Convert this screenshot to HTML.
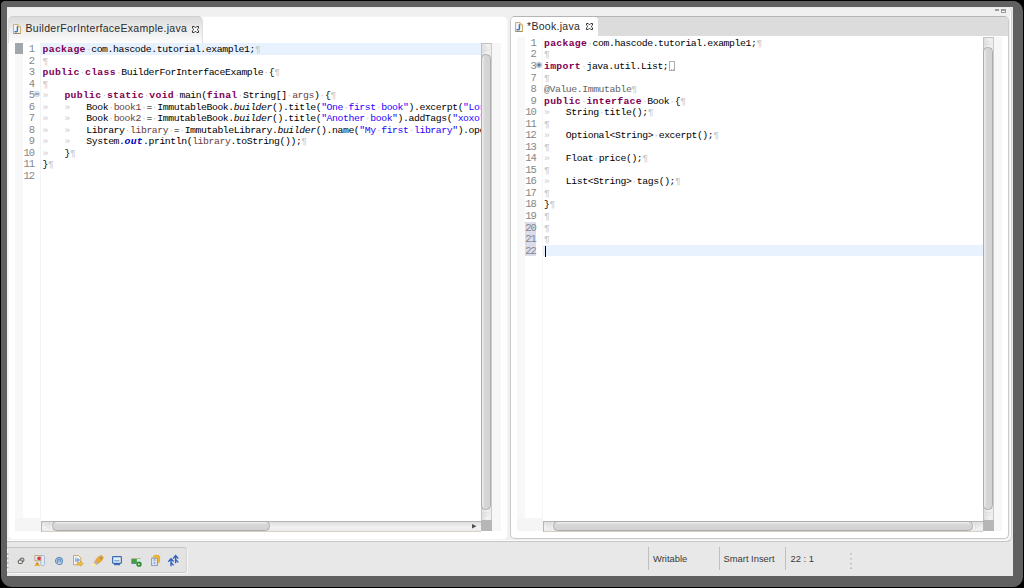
<!DOCTYPE html>
<html><head><meta charset="utf-8"><style>
*{margin:0;padding:0;box-sizing:border-box}
html,body{width:1024px;height:588px;overflow:hidden;background:#000}
body{position:relative;font-family:"Liberation Sans",sans-serif}
.abs{position:absolute}
svg{position:absolute;overflow:visible}
#shadow{position:absolute;left:0.8px;top:1px;width:1021.9px;height:585.8px;background:#606060;border-radius:4px 10px 10px 11px}
#frame{position:absolute;left:7px;top:7px;width:1006px;height:569px;background:#e8e8e8}
/* panels */
#lp{position:absolute;left:8px;top:16px;width:499.5px;height:523.5px;border-radius:5px;background:#fff;border:1px solid #f4f4f4}
#rp{position:absolute;left:510px;top:16px;width:499px;height:523px;border-radius:5px;border:1px solid #cacaca;border-top-color:#b4b4b4;background:#fff}
.code{font-family:"Liberation Mono",monospace;font-size:9.8px;line-height:11.54px;letter-spacing:-0.42px}
.ln{position:absolute;width:40px;text-align:right;color:#868686;white-space:pre;height:11.54px;font-size:10.5px;letter-spacing:-0.9px}
.cl{position:absolute;white-space:pre;color:#000;height:11.54px}
.cl b{color:#7f0055;font-weight:bold;letter-spacing:0.28px}
.cl i{font-style:normal}
.cl .w{color:#cacaca}
.cl .v{color:#6a3e3e}
.cl .s{color:#2a00ff}
.cl .it{font-style:italic}
.cl .sf{color:#0000c0;font-style:italic;font-weight:bold;letter-spacing:0.28px}
.cl .an{color:#646464}
.cl .box{display:inline-block;width:6.5px;height:10.5px;border:1px solid #adadad;vertical-align:-2.5px;margin-left:0.3px;background:radial-gradient(circle at 1.6px 7.6px,#b4b4b4 0.5px,transparent 0.9px),radial-gradient(circle at 3.6px 7.6px,#b4b4b4 0.5px,transparent 0.9px)}
.cl .cur{display:inline-block;width:1px;height:11px;background:#000;vertical-align:top;margin-left:1px}
.tabtxt{position:absolute;font-size:10.5px;letter-spacing:0.3px;color:#2b2b2b;white-space:pre;line-height:13px}
.stxt{position:absolute;font-size:9.4px;color:#3a3a3a;white-space:pre;line-height:11px}
/* scrollbars */
.vsb{position:absolute;width:11px;border:1px solid #c2c2c2;border-right-color:#d2ccc0;border-bottom:none;background:linear-gradient(90deg,#dedede,#f2f2f2 60%,#ebebeb)}
.vthumb{position:absolute;width:9.5px;border:1px solid #adadad;border-left-width:1.5px;border-radius:4.5px;background:linear-gradient(90deg,#eeeeee,#d6d6d6 35%,#d3d3d3)}
.hsb{position:absolute;height:11px;border:1px solid #b6b6b6;border-bottom-color:#d6d0c4;border-right:none;background:linear-gradient(#dedede,#f2f2f2 60%,#ebebeb)}
.hthumb{position:absolute;height:9.5px;border:1px solid #adadad;border-top-width:1.5px;border-radius:4.5px;background:linear-gradient(#eeeeee,#d6d6d6 35%,#d3d3d3)}
.corner{position:absolute;width:11px;height:11px;background:#b6b6b6}
.sep{position:absolute;width:1px;background:#bfbfbf}

</style></head><body>
<div id="shadow"></div>
<div id="frame">
  <div class="abs" style="left:0;top:0;width:1005px;height:535px;background:#f0f0f0;border-top:1px solid #eaeaea;border-right:1px solid #d2d2d2;border-bottom:1px solid #c6c6c6;border-radius:2px 5px 6px 0;box-shadow:inset -1px -1px 0 #fdfdfd"></div>
</div>
<!-- min/max -->
<div class="abs" style="left:995px;top:9px;width:4px;height:2px;background:#9a9a9a"></div>
<div class="abs" style="left:1001px;top:9px;width:5px;height:4px;border:1px solid #9a9a9a;border-top-width:2px;background:#fff"></div>

<!-- ================= left panel ================= -->
<div id="lp"></div>
<div class="abs" style="left:8px;top:16px;width:195px;height:27px;border:1px solid #dedede;border-top-color:#cfcfcf;border-bottom:none;border-radius:5px 5px 0 0;background:linear-gradient(#dcdcdc,#f6f6f6 80%,#fff)"></div>
<svg style="left:13px;top:24px" width="8" height="10" viewBox="0 0 8 10">
  <path d="M0.5 0.5 H5 L7.5 3 V9.5 H0.5 Z" fill="#f2f6fb" stroke="#cdb06a" stroke-width="1"/>
  <path d="M5 0.5 V3 H7.5" fill="#e9d49c" stroke="#cdb06a" stroke-width="0.7"/>
  <path d="M0.5 9.5 H7.5" stroke="#a08e5e" stroke-width="1"/>
  <path d="M4.4 2.2 V6.4 Q4.4 7.9 3.1 7.9 Q2.2 7.9 1.8 7.1" fill="none" stroke="#3d6fb2" stroke-width="1.4"/>
</svg>
<div class="tabtxt" style="left:25.5px;top:22.4px">BuilderForInterfaceExample.java</div>
<svg style="left:192px;top:26px" width="7" height="7" viewBox="0 0 7 7">
  <path d="M0.5 0.5 H2.2 L3.5 1.9 L4.8 0.5 H6.5 V2.2 L5.1 3.5 L6.5 4.8 V6.5 H4.8 L3.5 5.1 L2.2 6.5 H0.5 V4.8 L1.9 3.5 L0.5 2.2 Z" fill="#fff" stroke="#333" stroke-width="1"/>
</svg>
<!-- ruler + gutter -->
<div class="abs" style="left:15px;top:43px;width:8px;height:475px;background:#f8f8f8"></div>
<div class="abs" style="left:15px;top:43px;width:8px;height:11.3px;background:#a0a8ae"></div>
<div class="abs" style="left:40px;top:43px;width:1px;height:475px;background:#f3f3f3"></div>
<div class="abs" style="left:41px;top:43.2px;width:440px;height:11.5px;background:#e8f2fe"></div>
<svg style="left:34px;top:91px" width="6" height="6" viewBox="0 0 6 6">
  <circle cx="3" cy="3" r="2.7" fill="#dde7f0" stroke="#b8c8d8" stroke-width="0.6"/>
  <path d="M1.2 3 H4.8" stroke="#56687a" stroke-width="1"/>
</svg>
<div class="code abs" style="left:-5.8px;top:0">
<div class="ln" style="top:44.00px">1</div>
<div class="ln" style="top:55.54px">2</div>
<div class="ln" style="top:67.08px">3</div>
<div class="ln" style="top:78.62px">4</div>
<div class="ln" style="top:90.16px">5</div>
<div class="ln" style="top:101.70px">6</div>
<div class="ln" style="top:113.24px">7</div>
<div class="ln" style="top:124.78px">8</div>
<div class="ln" style="top:136.32px">9</div>
<div class="ln" style="top:147.86px">10</div>
<div class="ln" style="top:159.40px">11</div>
<div class="ln" style="top:170.94px">12</div>
</div>
<div class="code abs" style="left:42.6px;top:0;width:438px;height:520px;overflow:hidden">
<div class="cl" style="top:44.00px"><b>package</b><i class="w">·</i><span>com.hascode.tutorial.example1;</span><i class="w">¶</i></div>
<div class="cl" style="top:55.54px"><i class="w">¶</i></div>
<div class="cl" style="top:67.08px"><b>public</b><i class="w">·</i><b>class</b><i class="w">·</i><span>BuilderForInterfaceExample</span><i class="w">·</i><span>{</span><i class="w">¶</i></div>
<div class="cl" style="top:78.62px"><i class="w">¶</i></div>
<div class="cl" style="top:90.16px"><i class="w">»</i><span>   </span><b>public</b><i class="w">·</i><b>static</b><i class="w">·</i><b>void</b><i class="w">·</i><span>main(</span><b>final</b><i class="w">·</i><span>String[]</span><i class="w">·</i><span class="v">args</span><span>)</span><i class="w">·</i><span>{</span><i class="w">¶</i></div>
<div class="cl" style="top:101.70px"><i class="w">»</i><span>   </span><i class="w">»</i><span>   </span><span>Book</span><i class="w">·</i><span class="v">book1</span><i class="w">·</i><span>=</span><i class="w">·</i><span>ImmutableBook.</span><span class="it">builder</span><span>().title(</span><span class="s">&quot;One</span><i class="w">·</i><span class="s">first</span><i class="w">·</i><span class="s">book&quot;</span><span>).excerpt(</span><span class="s">&quot;Lorem</span><i class="w">·</i><span class="s">ipsum&quot;</span></div>
<div class="cl" style="top:113.24px"><i class="w">»</i><span>   </span><i class="w">»</i><span>   </span><span>Book</span><i class="w">·</i><span class="v">book2</span><i class="w">·</i><span>=</span><i class="w">·</i><span>ImmutableBook.</span><span class="it">builder</span><span>().title(</span><span class="s">&quot;Another</span><i class="w">·</i><span class="s">book&quot;</span><span>).addTags(</span><span class="s">&quot;xoxo&quot;,</span><i class="w">·</i><span class="s">&quot;yo&quot;</span></div>
<div class="cl" style="top:124.78px"><i class="w">»</i><span>   </span><i class="w">»</i><span>   </span><span>Library</span><i class="w">·</i><span class="v">library</span><i class="w">·</i><span>=</span><i class="w">·</i><span>ImmutableLibrary.</span><span class="it">builder</span><span>().name(</span><span class="s">&quot;My</span><i class="w">·</i><span class="s">first</span><i class="w">·</i><span class="s">library&quot;</span><span>).open()</span></div>
<div class="cl" style="top:136.32px"><i class="w">»</i><span>   </span><i class="w">»</i><span>   </span><span>System.</span><span class="sf">out</span><span>.println(</span><span class="v">library</span><span>.toString());</span><i class="w">¶</i></div>
<div class="cl" style="top:147.86px"><i class="w">»</i><span>   </span><span>}</span><i class="w">¶</i></div>
<div class="cl" style="top:159.40px"><span>}</span><i class="w">¶</i></div>
<div class="cl" style="top:170.94px"></div>
</div>
<!-- left v scrollbar -->
<div class="vsb" style="left:480.5px;top:42.8px;height:477.5px"></div>
<svg style="left:483px;top:46px" width="6" height="5" viewBox="0 0 6 5"><path d="M3 0.5 L5.5 4.5 H0.5 Z" fill="none" stroke="#d6d6d6" stroke-width="0.6"/></svg>
<div class="vthumb" style="left:481px;top:54px;height:456px"></div>
<svg style="left:483px;top:512px" width="6" height="5" viewBox="0 0 6 5"><path d="M3 4.5 L5.5 0.5 H0.5 Z" fill="none" stroke="#d6d6d6" stroke-width="0.6"/></svg>
<div class="corner" style="left:480.5px;top:520.3px"></div>
<!-- left h scrollbar -->
<div class="hsb" style="left:41px;top:520.5px;width:439.5px"></div>
<svg style="left:45px;top:523px" width="5" height="6" viewBox="0 0 5 6"><path d="M0.5 3 L4.5 0.5 V5.5 Z" fill="none" stroke="#d6d6d6" stroke-width="0.6"/></svg>
<div class="hthumb" style="left:52px;top:521px;width:218px"></div>
<svg style="left:472px;top:524px" width="5" height="5" viewBox="0 0 5 5"><path d="M0 0 L4.5 2.3 L0 4.6 Z" fill="#4e4e4e"/></svg>
<!-- left overview ruler -->
<div class="abs" style="left:492px;top:43px;width:8.5px;height:488px;background:#f7f7f7"></div>
<div class="abs" style="left:15px;top:518.4px;width:26px;height:13px;background:#f5f5f5"></div>

<!-- ================= right panel ================= -->
<div id="rp"></div>
<div class="abs" style="left:511px;top:17px;width:497px;height:19px;background:#dcdcdc;border-radius:4px 4px 0 0"></div>
<div class="abs" style="left:511px;top:17px;width:87px;height:19px;background:#fff;border-radius:4px 4px 0 0"></div>
<svg style="left:515px;top:21.5px" width="8" height="10" viewBox="0 0 8 10">
  <path d="M0.5 0.5 H5 L7.5 3 V9.5 H0.5 Z" fill="#f2f6fb" stroke="#cdb06a" stroke-width="1"/>
  <path d="M5 0.5 V3 H7.5" fill="#e9d49c" stroke="#cdb06a" stroke-width="0.7"/>
  <path d="M0.5 9.5 H7.5" stroke="#a08e5e" stroke-width="1"/>
  <path d="M4.4 2.2 V6.4 Q4.4 7.9 3.1 7.9 Q2.2 7.9 1.8 7.1" fill="none" stroke="#3d6fb2" stroke-width="1.4"/>
</svg>
<div class="tabtxt" style="left:527px;top:20.2px">*Book.java</div>
<svg style="left:586px;top:23px" width="7" height="7" viewBox="0 0 7 7">
  <path d="M0.5 0.5 H2.2 L3.5 1.9 L4.8 0.5 H6.5 V2.2 L5.1 3.5 L6.5 4.8 V6.5 H4.8 L3.5 5.1 L2.2 6.5 H0.5 V4.8 L1.9 3.5 L0.5 2.2 Z" fill="#fff" stroke="#333" stroke-width="1"/>
</svg>
<div class="abs" style="left:517px;top:37px;width:8px;height:481.4px;background:#f8f8f8"></div><div class="abs" style="left:517px;top:518.4px;width:25.5px;height:13px;background:#f5f5f5"></div>
<div class="abs" style="left:542px;top:37px;width:1px;height:483px;background:#f6f6f6"></div>
<div class="abs" style="left:543px;top:244.6px;width:440px;height:11.54px;background:#e8f2fe"></div>
<div class="abs" style="left:525px;top:221.5px;width:11px;height:34.6px;background:#dcdcea"></div>
<svg style="left:535.8px;top:62px" width="6" height="6" viewBox="0 0 6 6">
  <circle cx="3" cy="3" r="2.8" fill="#cfdcea" stroke="#9fb4ca" stroke-width="0.6"/>
  <path d="M1.2 3 H4.8 M3 1.2 V4.8" stroke="#3e5a7a" stroke-width="1"/>
</svg>
<div class="code abs" style="left:496px;top:0">
<div class="ln" style="top:37.90px">1</div>
<div class="ln" style="top:49.44px">2</div>
<div class="ln" style="top:60.98px">3</div>
<div class="ln" style="top:72.52px">7</div>
<div class="ln" style="top:84.06px">8</div>
<div class="ln" style="top:95.60px">9</div>
<div class="ln" style="top:107.14px">10</div>
<div class="ln" style="top:118.68px">11</div>
<div class="ln" style="top:130.22px">12</div>
<div class="ln" style="top:141.76px">13</div>
<div class="ln" style="top:153.30px">14</div>
<div class="ln" style="top:164.84px">15</div>
<div class="ln" style="top:176.38px">16</div>
<div class="ln" style="top:187.92px">17</div>
<div class="ln" style="top:199.46px">18</div>
<div class="ln" style="top:211.00px">19</div>
<div class="ln" style="top:222.54px">20</div>
<div class="ln" style="top:234.08px">21</div>
<div class="ln" style="top:245.62px">22</div>
</div>
<div class="code abs" style="left:544px;top:0;width:439px;height:520px;overflow:hidden">
<div class="cl" style="top:37.90px"><b>package</b><i class="w">·</i><span>com.hascode.tutorial.example1;</span><i class="w">¶</i></div>
<div class="cl" style="top:49.44px"><i class="w">¶</i></div>
<div class="cl" style="top:60.98px"><b>import</b><i class="w">·</i><span>java.util.List;</span><span class="box"></span></div>
<div class="cl" style="top:72.52px"><i class="w">¶</i></div>
<div class="cl" style="top:84.06px"><span class="an">@Value.Immutable</span><i class="w">¶</i></div>
<div class="cl" style="top:95.60px"><b>public</b><i class="w">·</i><b>interface</b><i class="w">·</i><span>Book</span><i class="w">·</i><span>{</span><i class="w">¶</i></div>
<div class="cl" style="top:107.14px"><i class="w">»</i><span>   </span><span>String</span><i class="w">·</i><span>title();</span><i class="w">¶</i></div>
<div class="cl" style="top:118.68px"><i class="w">¶</i></div>
<div class="cl" style="top:130.22px"><i class="w">»</i><span>   </span><span>Optional&lt;String&gt;</span><i class="w">·</i><span>excerpt();</span><i class="w">¶</i></div>
<div class="cl" style="top:141.76px"><i class="w">¶</i></div>
<div class="cl" style="top:153.30px"><i class="w">»</i><span>   </span><span>Float</span><i class="w">·</i><span>price();</span><i class="w">¶</i></div>
<div class="cl" style="top:164.84px"><i class="w">¶</i></div>
<div class="cl" style="top:176.38px"><i class="w">»</i><span>   </span><span>List&lt;String&gt;</span><i class="w">·</i><span>tags();</span><i class="w">¶</i></div>
<div class="cl" style="top:187.92px"><i class="w">¶</i></div>
<div class="cl" style="top:199.46px"><span>}</span><i class="w">¶</i></div>
<div class="cl" style="top:211.00px"><i class="w">¶</i></div>
<div class="cl" style="top:222.54px"><i class="w">¶</i></div>
<div class="cl" style="top:234.08px"><i class="w">¶</i></div>
<div class="cl" style="top:245.62px"><span class="cur"></span></div>
</div>
<!-- right v scrollbar -->
<div class="vsb" style="left:982.5px;top:36.8px;height:483.5px"></div>
<svg style="left:985px;top:40px" width="6" height="5" viewBox="0 0 6 5"><path d="M3 0.5 L5.5 4.5 H0.5 Z" fill="none" stroke="#d6d6d6" stroke-width="0.6"/></svg>
<div class="vthumb" style="left:983px;top:47.3px;height:462.5px"></div>
<svg style="left:985px;top:512px" width="6" height="5" viewBox="0 0 6 5"><path d="M3 4.5 L5.5 0.5 H0.5 Z" fill="none" stroke="#d6d6d6" stroke-width="0.6"/></svg>
<div class="corner" style="left:982.5px;top:520.3px"></div>
<!-- right h scrollbar -->
<div class="hsb" style="left:542.5px;top:520.5px;width:440px"></div>
<svg style="left:546px;top:523px" width="5" height="6" viewBox="0 0 5 6"><path d="M0.5 3 L4.5 0.5 V5.5 Z" fill="none" stroke="#d6d6d6" stroke-width="0.6"/></svg>
<div class="hthumb" style="left:553px;top:521px;width:420px"></div>
<svg style="left:975px;top:523px" width="5" height="6" viewBox="0 0 5 6"><path d="M4.5 3 L0.5 0.5 V5.5 Z" fill="none" stroke="#d6d6d6" stroke-width="0.6"/></svg>
<div class="abs" style="left:994px;top:37px;width:8px;height:494px;background:#f7f7f7"></div>

<!-- ================= status bar ================= -->
<div class="abs" style="left:7px;top:547px;width:180px;height:26px;border:1px solid #c3c3c3;border-left:none;border-right-color:#d4d4d4;border-bottom-color:#c9c9c9;border-radius:0 3px 3px 0;background:#e3e3e3;box-shadow:1px 1px 0 #f7f7f7"></div>
<div class="abs" style="left:7px;top:549px;width:1px;height:22px;background:#f6f6f6"></div><svg style="left:7px;top:552px" width="2" height="18" viewBox="0 0 2 18"><path d="M0.8 1.3 V2.7 M0.8 5.8 V7.2 M0.8 10.3 V11.7 M0.8 14.9 V16.3" stroke="#a49a7c" stroke-width="1.3"/></svg>
<div class="sep" style="left:647.5px;top:547px;height:23px"></div>
<div class="sep" style="left:718.5px;top:547px;height:23px"></div>
<div class="sep" style="left:785px;top:547px;height:23px"></div>
<svg style="left:850px;top:552px" width="2" height="18" viewBox="0 0 2 18"><path d="M1 1.2 V2.6 M1 6.2 V7.6 M1 10.9 V12.3 M1 15.6 V17" stroke="#9e9a90" stroke-width="1.1"/></svg>
<div class="stxt" style="left:653px;top:553px">Writable</div>
<div class="stxt" style="left:723.5px;top:553px">Smart Insert</div>
<div class="stxt" style="left:790.5px;top:553px">22 : 1</div>
<!-- trim bar icons -->
<svg style="left:17px;top:557px" width="8" height="8" viewBox="0 0 8 8">
  <rect x="3.2" y="1.2" width="3.6" height="3.4" rx="0.9" fill="none" stroke="#5a554e" stroke-width="1"/>
  <rect x="1.3" y="3.1" width="4.1" height="3.4" rx="0.9" fill="#e3e3e3" stroke="#5a554e" stroke-width="1"/>
</svg>
<svg style="left:34px;top:555px" width="11" height="11" viewBox="0 0 11 11">
  <rect x="6.8" y="0.5" width="3.6" height="10" rx="0.8" fill="#e6eef8" stroke="#9fb3d3" stroke-width="0.9"/>
  <rect x="0.9" y="0.5" width="6" height="5.2" fill="#dcecf4" stroke="#b8a878" stroke-width="0.9"/>
  <circle cx="5" cy="3.4" r="1.8" fill="#e8303c"/>
  <path d="M3.2 6.2 L6.2 11 H0.2 Z" fill="#e8b040"/>
  <path d="M3.2 8 V9.2" stroke="#704810" stroke-width="0.7"/>
</svg>
<svg style="left:55px;top:556.5px" width="8" height="8" viewBox="0 0 8 8">
  <circle cx="4" cy="4" r="3.4" fill="none" stroke="#4c86c4" stroke-width="1.1"/>
  <path d="M2.3 6 V3.2 Q2.3 2.4 3.1 2.4 Q4 2.4 4 3.2 V5.5 M4 3.2 Q4 2.4 4.9 2.4 Q5.7 2.4 5.7 3.2 V5.2" fill="none" stroke="#3d78b8" stroke-width="0.9"/>
</svg>
<svg style="left:73px;top:555px" width="11" height="12" viewBox="0 0 11 12">
  <path d="M0.5 0.5 H5.5 L7.8 2.8 V9.8 H0.5 Z" fill="#f2f6fa" stroke="#c9a95c" stroke-width="1"/>
  <path d="M3 2.5 Q2.2 4.5 3 7 M4 4 H6 V6 H4 Z" fill="none" stroke="#5c8cc8" stroke-width="0.9"/>
  <path d="M4 7.3 H7.5 V6 L10.4 8.6 L7.5 11.2 V9.9 H4 Z" fill="#eec048" stroke="#c89428" stroke-width="0.5"/>
</svg>
<svg style="left:91px;top:555px" width="13" height="12" viewBox="0 0 13 12">
  <path d="M7.6 1.6 L10.6 0.4 L12.4 2.2 L11.2 5.2 L7.2 8.6 L4.2 5.6 Z" fill="#eaa836" stroke="#d08a20" stroke-width="0.5"/>
  <path d="M9 3.2 L10.2 2.2 M9.8 4.2 L11 3.2" stroke="#5a7890" stroke-width="0.9"/>
  <path d="M4.2 5.6 L7.2 8.6 L5.4 10.2 L2.6 7.4 Z" fill="#b8b2ba"/>
  <path d="M2.6 7.4 L5.4 10.2 L2.4 11.6 L0.6 11 L0.8 9.6 Z" fill="#f6e890"/>
  <path d="M1.2 10.8 L2.8 9.2" stroke="#fffbe0" stroke-width="1"/>
</svg>
<svg style="left:111.5px;top:555.5px" width="10" height="10" viewBox="0 0 10 10">
  <rect x="0.6" y="0.6" width="8.8" height="6.8" rx="0.8" fill="#e4eef8" stroke="#3a6cb4" stroke-width="1.2"/>
  <path d="M2.2 4.8 H7.5" stroke="#4870a8" stroke-width="0.8"/>
  <path d="M2 8.4 H8" stroke="#3a6cb4" stroke-width="1.6"/>
</svg>
<svg style="left:130.5px;top:557.5px" width="11" height="9" viewBox="0 0 11 9">
  <rect x="0.3" y="0.4" width="9.4" height="5" fill="#d6ecf4"/>
  <rect x="0.3" y="1" width="5.6" height="4.4" fill="#44a044"/>
  <path d="M0.3 0.5 H9.7" stroke="#b8a880" stroke-width="0.8"/>
  <path d="M0.3 5.4 H5.5" stroke="#2a5a8a" stroke-width="0.6"/>
  <circle cx="8" cy="6.2" r="2.6" fill="#2e8a2e"/>
  <path d="M7.2 4.9 L9.2 6.2 L7.2 7.5 Z" fill="#e8f8e8"/>
</svg>
<svg style="left:150.5px;top:555px" width="10" height="12" viewBox="0 0 10 12">
  <path d="M2.4 1.5 Q2.4 0.2 5.5 0.2 Q8.6 0.2 8.6 1.5 V6.8 Q8.6 8 5.5 8 Q2.4 8 2.4 6.8 Z" fill="#f0b830" stroke="#d08a18" stroke-width="0.5"/>
  <rect x="0.6" y="3.2" width="5.8" height="7.4" fill="#dce6f4" stroke="#8696b0" stroke-width="0.9"/>
  <path d="M2.6 5 H4.4 M2.6 8 H4.4" stroke="#4a6aa8" stroke-width="0.9"/>
</svg>
<svg style="left:167px;top:554.5px" width="13" height="12" viewBox="0 0 13 12">
  <path d="M4 11.2 V4.3 M1.3 6.7 L4 3.7 L6.6 6.5 M4 7.4 L6.7 10.4" fill="none" stroke="#2e62c4" stroke-width="1.4"/>
  <path d="M8.6 8.2 V1.2 M6 3.6 L8.6 0.6 L11.2 3.4 M8.6 4.4 L11.3 7.4" fill="none" stroke="#2e62c4" stroke-width="1.4"/>
</svg>


</body></html>
